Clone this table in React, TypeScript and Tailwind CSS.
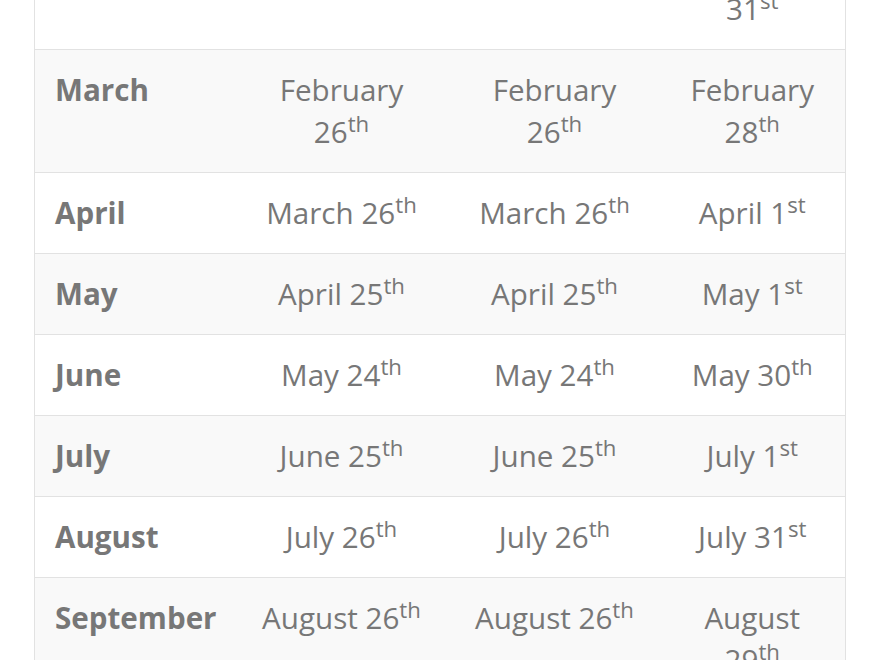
import React from "react";

type Row = { month: string; a: [string, string]; b: [string, string]; c: [string, string] };

const rows: Row[] = [
  { month: "February", a: ["January 26", "th"], b: ["January 26", "th"], c: ["January 31", "st"] },
  { month: "March", a: ["February 26", "th"], b: ["February 26", "th"], c: ["February 28", "th"] },
  { month: "April", a: ["March 26", "th"], b: ["March 26", "th"], c: ["April 1", "st"] },
  { month: "May", a: ["April 25", "th"], b: ["April 25", "th"], c: ["May 1", "st"] },
  { month: "June", a: ["May 24", "th"], b: ["May 24", "th"], c: ["May 30", "th"] },
  { month: "July", a: ["June 25", "th"], b: ["June 25", "th"], c: ["July 1", "st"] },
  { month: "August", a: ["July 26", "th"], b: ["July 26", "th"], c: ["July 31", "st"] },
  { month: "September", a: ["August 26", "th"], b: ["August 26", "th"], c: ["August 29", "th"] },
  { month: "October", a: ["September 25", "th"], b: ["September 25", "th"], c: ["October 1", "st"] },
];

function DateCell({ v }: { v: [string, string] }) {
  return (
    <td className="px-[18px] pt-[19px] pb-[19px] text-center align-top font-normal">
      {v[0]}
      <sup>{v[1]}</sup>
    </td>
  );
}

export default function App() {
  return (
    <div className="h-[660px] w-[880px] overflow-hidden bg-white">
      <table
        className="ml-[34px] mt-[-73px] w-[811px] table-fixed border-collapse border-x border-[#e2e2e2] text-[29.6px] leading-[42px] text-[#777777]"
        style={{ fontFamily: '"Open Sans", "Noto Sans", sans-serif' }}
      >
        <colgroup>
          <col className="w-[199px]" />
          <col className="w-[216px]" />
          <col className="w-[210px]" />
          <col className="w-[186px]" />
        </colgroup>
        <tbody>
          {rows.map((r, i) => (
            <tr
              key={r.month}
              className={
                i % 2 === 1
                  ? "border-b border-[#e2e2e2] bg-[#f9f9f9]"
                  : "border-b border-[#e2e2e2] bg-white"
              }
            >
              <td className="pl-[20px] pr-[10px] pt-[19px] pb-[19px] text-left align-top font-bold">{r.month}</td>
              <DateCell v={r.a} />
              <DateCell v={r.b} />
              <DateCell v={r.c} />
            </tr>
          ))}
        </tbody>
      </table>
    </div>
  );
}
